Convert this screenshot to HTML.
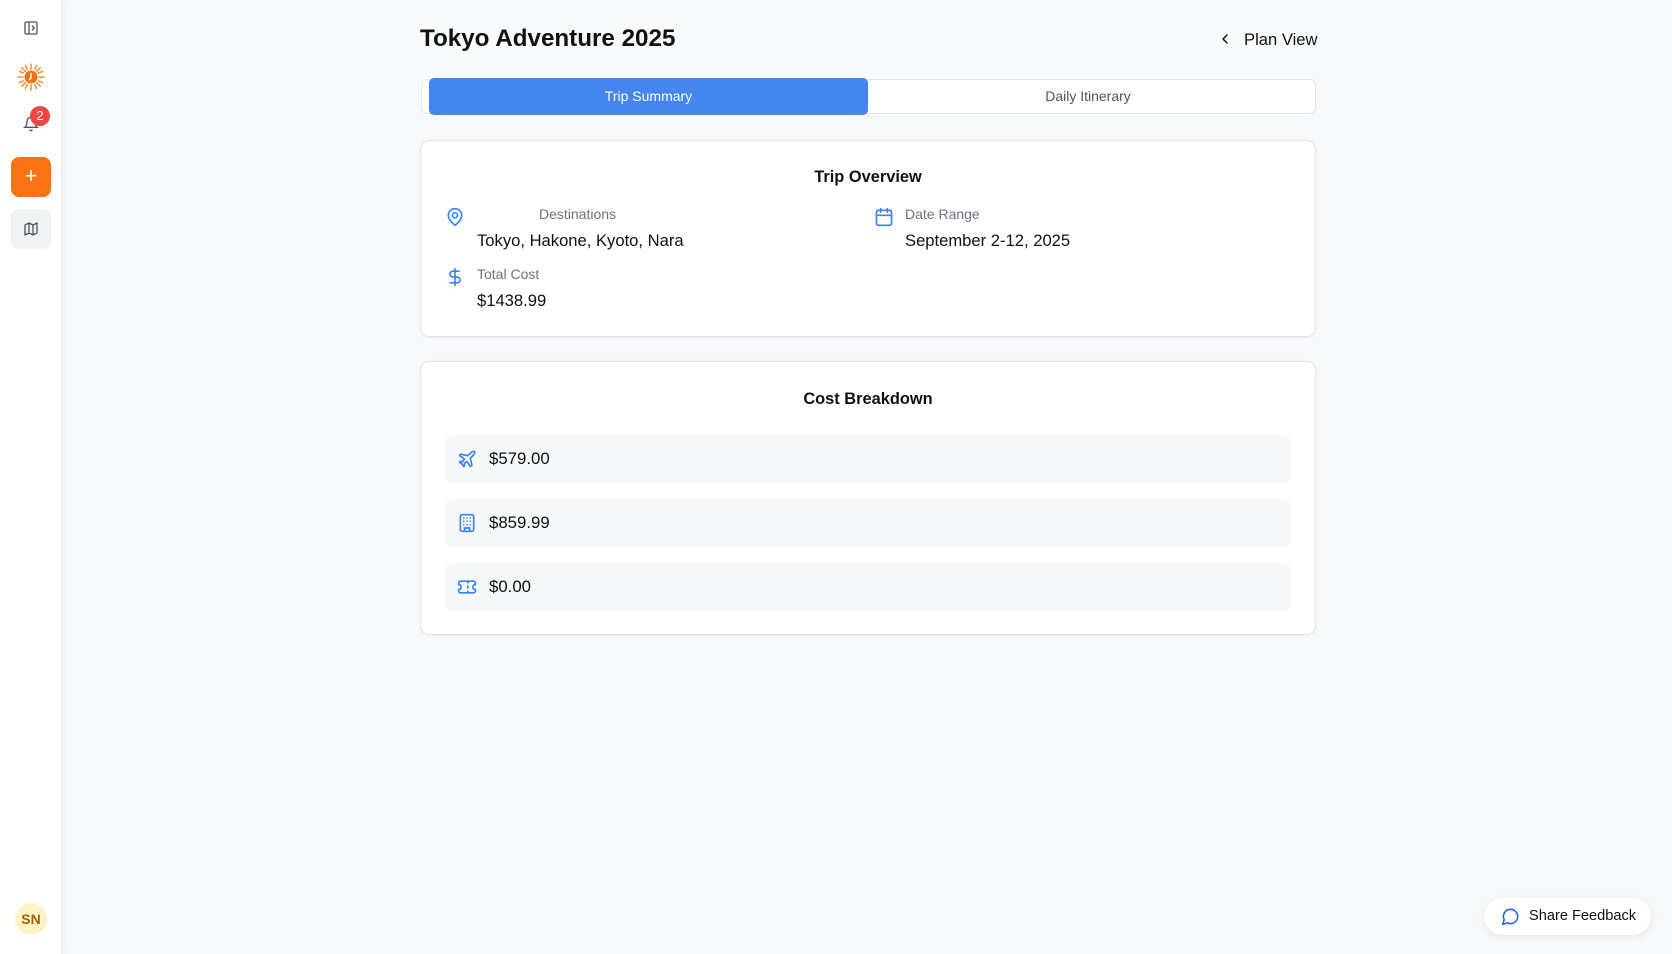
<!DOCTYPE html>
<html><head><meta charset="utf-8"><style>
*{box-sizing:border-box;margin:0;padding:0}
body{width:1672px;height:954px;background:#f8f9fb;font-family:"Liberation Sans",sans-serif;color:#111;position:relative;overflow:hidden}
.side{position:absolute;left:0;top:0;width:62px;height:954px;background:#fff;border-right:1px solid #e8e9ec;box-shadow:2px 0 6px rgba(0,0,0,.04)}
.abs{position:absolute}
.card{position:absolute;left:420px;width:896px;background:#fff;border:1px solid #e4e5e8;border-radius:10px;box-shadow:0 1px 3px rgba(0,0,0,.06)}
.h{position:absolute;left:0;right:0;text-align:center;font-weight:bold;font-size:16.4px}
.lbl{position:absolute;font-size:14px;color:#6b7280}
.val{position:absolute;font-size:16.6px;color:#111}
.row{position:absolute;left:24px;width:846px;height:48px;background:#f7f8fa;border-radius:8px}
.row svg{position:absolute;left:12px;top:14px}
.row span{position:absolute;left:44px;top:14px;font-size:16.8px}
</style></head><body>
<div class="side">
 <svg class="abs" style="left:23px;top:20px" width="16" height="16" viewBox="0 0 24 24" fill="none" stroke="#555" stroke-width="2" stroke-linecap="round" stroke-linejoin="round"><rect x="3" y="3" width="18" height="18" rx="2"/><path d="M9 3v18M14 9l3 3-3 3"/></svg>
 <svg class="abs" style="left:16px;top:62px" width="30" height="30" viewBox="0 0 30 30"><g stroke="#fb923c" stroke-width="1.6" stroke-linecap="round"><path d="M15 2v5M15 23v5M2 15h5M23 15h5M5.8 5.8l3.5 3.5M20.7 20.7l3.5 3.5M5.8 24.2l3.5-3.5M20.7 9.3l3.5-3.5M9.5 3.5l1.5 4M19 22.5l1.5 4M3.5 20.5l4-1.5M22.5 11l4-1.5M3.5 9.5l4 1.5M22.5 19l4 1.5M9.5 26.5l1.5-4M19 7.5l1.5-4"/></g><circle cx="15" cy="15" r="6.5" fill="#f97316"/><path d="M15 11v5l-2 2" stroke="#fff" stroke-width="1.5" fill="none"/></svg>
 <svg class="abs" style="left:23px;top:116px" width="16" height="16" viewBox="0 0 24 24" fill="none" stroke="#555" stroke-width="2" stroke-linecap="round"><path d="M6 8a6 6 0 0 1 12 0c0 7 3 9 3 9H3s3-2 3-9M10.3 21a1.9 1.9 0 0 0 3.4 0"/></svg>
 <div class="abs" style="left:30px;top:106px;width:20px;height:20px;border-radius:50%;background:#ef4444;color:#fff;font-size:13px;text-align:center;line-height:20px">2</div>
 <div class="abs" style="left:11px;top:157px;width:40px;height:40px;border-radius:8px;background:#f97316;color:#fff;font-size:22px;text-align:center;line-height:38px">+</div>
 <div class="abs" style="left:11px;top:209px;width:40px;height:40px;border-radius:8px;background:#f1f2f4"></div>
 <svg class="abs" style="left:23px;top:221px" width="16" height="16" viewBox="0 0 24 24" fill="none" stroke="#555" stroke-width="2" stroke-linejoin="round"><path d="M3 6l6-3 6 3 6-3v15l-6 3-6-3-6 3zM9 3v15M15 6v15"/></svg>
 <div class="abs" style="left:15px;top:903px;width:32px;height:32px;border-radius:50%;background:#fef3c7;color:#a16207;font-weight:bold;font-size:14px;text-align:center;line-height:32px">SN</div>
</div>
<div class="abs" style="left:420px;top:25px;font-size:24.2px;font-weight:bold">Tokyo Adventure 2025</div>
<svg class="abs" style="left:1217px;top:31px" width="16" height="16" viewBox="0 0 24 24" fill="none" stroke="#111" stroke-width="2.2" stroke-linecap="round" stroke-linejoin="round"><path d="M15 18l-6-6 6-6"/></svg>
<div class="abs" style="left:1244px;top:30px;font-size:16.6px">Plan View</div>
<div class="abs" style="left:421px;top:79px;width:895px;height:35px;background:#fff;border:1px solid #e4e5e8;border-radius:6px"></div>
<div class="abs" style="left:429px;top:78px;width:439px;height:37px;background:#4485f0;border-radius:5px;color:#fff;font-size:14px;text-align:center;line-height:37px">Trip Summary</div>
<div class="abs" style="left:868px;top:78px;width:440px;height:37px;color:#555;font-size:14px;text-align:center;line-height:37px">Daily Itinerary</div>
<div class="card" style="top:140px;height:197px">
 <div class="h" style="top:27px">Trip Overview</div>
 <svg class="abs" style="left:24px;top:66px" width="20" height="20" viewBox="0 0 24 24" fill="none" stroke="#3b82f6" stroke-width="2"><path d="M20 10c0 6-8 12-8 12s-8-6-8-12a8 8 0 0 1 16 0z"/><circle cx="12" cy="10" r="3"/></svg>
 <div class="lbl" style="left:118px;top:65px">Destinations</div>
 <div class="val" style="left:56px;top:90px">Tokyo, Hakone, Kyoto, Nara</div>
 <svg class="abs" style="left:453px;top:66px" width="20" height="20" viewBox="0 0 24 24" fill="none" stroke="#3b82f6" stroke-width="2" stroke-linecap="round"><rect x="3" y="4" width="18" height="18" rx="2"/><path d="M16 2v4M8 2v4M3 10h18"/></svg>
 <div class="lbl" style="left:484px;top:65px">Date Range</div>
 <div class="val" style="left:484px;top:90px">September 2-12, 2025</div>
 <svg class="abs" style="left:24px;top:126px" width="20" height="20" viewBox="0 0 24 24" fill="none" stroke="#3b82f6" stroke-width="2" stroke-linecap="round"><path d="M12 2v20M17 5H9.5a3.5 3.5 0 0 0 0 7h5a3.5 3.5 0 0 1 0 7H6"/></svg>
 <div class="lbl" style="left:56px;top:125px">Total Cost</div>
 <div class="val" style="left:56px;top:150px">$1438.99</div>
</div>
<div class="card" style="top:361px;height:274px">
 <div class="h" style="top:28px">Cost Breakdown</div>
 <div class="row" style="top:73px"><svg width="20" height="20" viewBox="0 0 24 24" fill="none" stroke="#3b82f6" stroke-width="2" stroke-linejoin="round"><path d="M17.8 19.2L16 11l3.5-3.5C21 6 21.5 4 21 3c-1-.5-3 0-4.5 1.5L13 8 4.8 6.2c-.5-.1-.9.1-1.1.5l-.3.5c-.2.5-.1 1 .3 1.3L9 12l-2 3H4l-1 1 3 2 2 3 1-1v-3l3-2 3.5 5.3c.3.4.8.5 1.3.3l.5-.2c.4-.3.6-.7.5-1.2z"/></svg><span>$579.00</span></div>
 <div class="row" style="top:137px"><svg width="20" height="20" viewBox="0 0 24 24" fill="none" stroke="#3b82f6" stroke-width="2" stroke-linecap="round"><rect x="4" y="2" width="16" height="20" rx="2"/><path d="M9 22v-4h6v4M8 6h.01M12 6h.01M16 6h.01M8 10h.01M12 10h.01M16 10h.01M8 14h.01M12 14h.01M16 14h.01"/></svg><span>$859.99</span></div>
 <div class="row" style="top:201px"><svg width="20" height="20" viewBox="0 0 24 24" fill="none" stroke="#3b82f6" stroke-width="2" stroke-linecap="round"><path d="M2 9a3 3 0 0 1 0 6v2a2 2 0 0 0 2 2h16a2 2 0 0 0 2-2v-2a3 3 0 0 1 0-6V7a2 2 0 0 0-2-2H4a2 2 0 0 0-2 2zM13 5v2M13 17v2M13 11v2"/></svg><span>$0.00</span></div>
</div>
<div class="abs" style="left:1484px;top:898px;width:167px;height:37px;background:#fff;border-radius:19px;box-shadow:0 2px 8px rgba(0,0,0,.08)"></div>
<svg class="abs" style="left:1501px;top:907px" width="19" height="19" viewBox="0 0 24 24" fill="none" stroke="#2563eb" stroke-width="2" stroke-linejoin="round"><path d="M7.9 20A9 9 0 1 0 4 16.1L2 22z"/></svg>
<div class="abs" style="left:1529px;top:908px;font-size:14.6px">Share Feedback</div>
</body></html>
